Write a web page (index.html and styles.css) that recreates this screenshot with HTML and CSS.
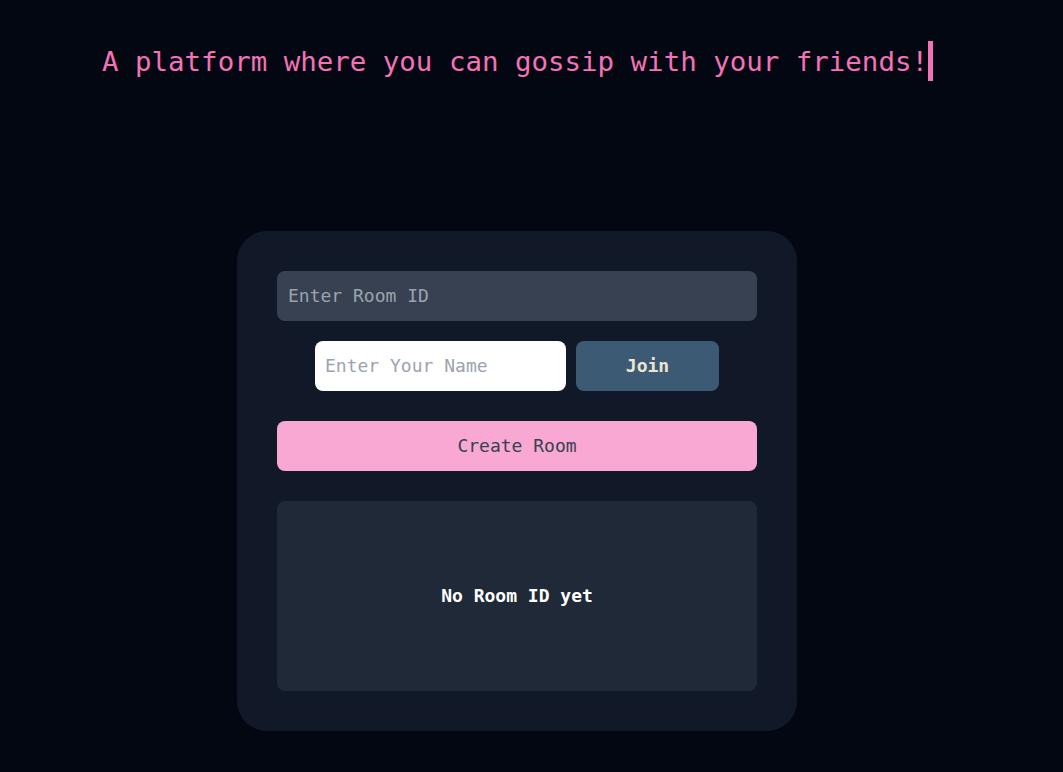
FILE: index.html
```html
<!DOCTYPE html>
<html>
<head>
<meta charset="utf-8">
<link rel="stylesheet" href="styles.css">
</head>
<body>
<header class="hero">
  <h1 class="tagline"><span class="tagline-text">A platform where you can gossip with your friends!</span><span class="caret"></span></h1>
</header>
<main class="main">
  <section class="card">
    <input class="room-input" type="text" placeholder="Enter Room ID">
    <div class="join-row">
      <input class="name-input" type="text" placeholder="Enter Your Name">
      <button class="join-btn">Join</button>
    </div>
    <button class="create-btn">Create Room</button>
    <div class="output">No Room ID yet</div>
  </section>
</main>
</body>
</html>
```
FILE: styles.css
```css
* { box-sizing: border-box; }
html, body {
  margin: 0;
  padding: 0;
  background: #030712;
  height: 100%;
  font-family: "DejaVu Sans Mono", "Liberation Mono", monospace;
}
.hero {
  padding: 41px 0 0 102px;
  height: 231px;
}
.tagline {
  margin: 0;
  font-weight: normal;
  font-size: 27.45px;
  line-height: 40px;
  color: #f472b6;
  display: flex;
  align-items: flex-start;
  white-space: nowrap;
}
.tagline-text {
  padding-top: 1px;
}
.caret {
  display: inline-block;
  width: 5px;
  height: 40px;
  margin-left: 0;
  background: #f472b6;
}
.main {
  padding-left: 237px;
}
.card {
  width: 560px;
  background: #111827;
  border-radius: 30px;
  padding: 40px;
  display: flex;
  flex-direction: column;
}
input, button {
  font-family: "DejaVu Sans Mono", "Liberation Mono", monospace;
  font-size: 18px;
  border: none;
  outline: none;
}
input::placeholder { color: #9ca3af; }
.room-input {
  height: 50px;
  width: 100%;
  background: #374151;
  border-radius: 8px;
  padding: 0 11px 2px;
  color: #e5e7eb;
}
.join-row {
  margin-top: 20px;
  display: flex;
  justify-content: center;
  gap: 10px;
}
.name-input {
  width: 251px;
  height: 50px;
  background: #ffffff;
  border-radius: 8px;
  padding: 0 10px 2px;
  color: #111827;
}
.join-btn {
  width: 143px;
  height: 50px;
  background: #3d5a74;
  border-radius: 8px;
  color: #ece6d0;
  font-weight: bold;
  padding: 0 0 2px;
}
.create-btn {
  margin-top: 30px;
  height: 50px;
  width: 100%;
  background: #f9a8d4;
  border-radius: 8px;
  color: #374151;
  padding: 0 0 2px;
}
.output {
  margin-top: 30px;
  height: 190px;
  background: #1f2937;
  border-radius: 8px;
  display: flex;
  align-items: center;
  justify-content: center;
  color: #ffffff;
  font-weight: bold;
  font-size: 18px;
  padding-bottom: 2px;
}
```
